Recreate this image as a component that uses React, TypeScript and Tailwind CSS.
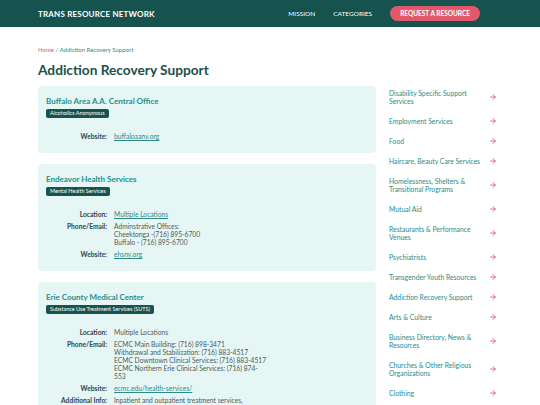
import { ArrowRight } from "lucide-react"

const categories = [
  "Disability Specific Support Services",
  "Employment Services",
  "Food",
  "Haircare, Beauty Care Services",
  "Homelessness, Shelters & Transitional Programs",
  "Mutual Aid",
  "Restaurants & Performance Venues",
  "Psychiatrists",
  "Transgender Youth Resources",
  "Addiction Recovery Support",
  "Arts & Culture",
  "Business Directory, News & Resources",
  "Churches & Other Religious Organizations",
  "Clothing",
]

type Row = { label: string; lines: string[]; link?: boolean }

type Resource = { name: string; tag: string; rows: Row[] }

const resources: Resource[] = [
  {
    name: "Buffalo Area A.A. Central Office",
    tag: "Alcoholics Anonymous",
    rows: [{ label: "Website:", lines: ["buffaloaany.org"], link: true }],
  },
  {
    name: "Endeavor Health Services",
    tag: "Mental Health Services",
    rows: [
      { label: "Location:", lines: ["Multiple Locations"], link: true },
      {
        label: "Phone/Email:",
        lines: ["Adminstrative Offices:", "Cheektonga -(716) 895-6700", "Buffalo - (716) 895-6700"],
      },
      { label: "Website:", lines: ["ehsny.org"], link: true },
    ],
  },
  {
    name: "Erie County Medical Center",
    tag: "Substance Use Treatment Services (SUTS)",
    rows: [
      { label: "Location:", lines: ["Multiple Locations"] },
      {
        label: "Phone/Email:",
        lines: [
          "ECMC Main Building: (716) 898-3471",
          "Withdrawal and Stabilization: (716) 883-4517",
          "ECMC Downtown Clinical Services: (716) 883-4517",
          "ECMC Northern Erie Clinical Services: (716) 874-",
          "553",
        ],
      },
      { label: "Website:", lines: ["ecmc.edu/health-services/"], link: true },
      {
        label: "Additional Info:",
        lines: ["Inpatient and outpatient treatment services,", "withdrawal and stabilization"],
      },
    ],
  },
]

function ResourceCard({ r }: { r: Resource }) {
  return (
    <div className="bg-[#e6f6f5] rounded-[4px] px-2 pt-[10px] pb-[13px]">
      <h2 className="text-[8px] font-bold text-[#23908a] leading-[10px]">{r.name}</h2>
      <div className="mt-[3px] flex">
        <span className="bg-[#17534f] text-white text-[5.5px] leading-[9px] px-[4px] rounded-[2px]">{r.tag}</span>
      </div>
      <div className="mt-[14px] flex flex-col gap-[4px]">
        {r.rows.map((row) => (
          <div key={row.label} className="flex gap-[7px] text-[6.7px] leading-[8px]">
            <div className="w-[61px] shrink-0 text-right font-bold text-[#2f4644]">{row.label}</div>
            <div className={row.link ? "text-[#2a8c87] underline" : "text-[#4d5c5b]"}>
              {row.lines.map((l) => (
                <div key={l}>{l}</div>
              ))}
            </div>
          </div>
        ))}
      </div>
    </div>
  )
}

export default function App() {
  return (
    <div className="min-h-screen bg-white font-['Lato',sans-serif] antialiased">
      {/* Header */}
      <header className="h-[27px] bg-[#16534f] flex items-center pl-[38px] pr-[60px]">
        <div className="text-white font-bold text-[8px] tracking-[0.2px]">TRANS RESOURCE NETWORK</div>
        <nav className="ml-auto flex items-center text-white text-[6.5px]">
          <span>MISSION</span>
          <span className="ml-[18px]">CATEGORIES</span>
          <span className="ml-[18px] bg-[#e15a6c] rounded-full px-[10px] py-[4px] font-bold text-[6.5px] leading-[7px]">
            REQUEST A RESOURCE
          </span>
        </nav>
      </header>

      <div className="px-[38px]">
        <div className="mt-[19px] text-[6px] leading-[8px] text-[#2a8c87]">
          <span className="text-[#e15a6c]">Home</span> / Addiction Recovery Support
        </div>
        <h1 className="mt-[7px] text-[13.7px] leading-[18px] font-bold text-[#1d504c]">Addiction Recovery Support</h1>

        <div className="mt-[7px] flex gap-[13px]">
          <main className="w-[338px] flex flex-col gap-[11px]">
            {resources.map((r) => (
              <ResourceCard key={r.name} r={r} />
            ))}
          </main>

          <aside className="w-[111px] -mt-[3px] flex flex-col">
            {categories.map((c) => (
              <div key={c} className="flex items-center justify-between py-[6px] pr-[3px]">
                <span className="w-[94px] text-[6.8px] leading-[8px] text-[#2a8c87]">{c}</span>
                <ArrowRight className="w-[8px] h-[8px] text-[#e8687a]" strokeWidth={3} />
              </div>
            ))}
          </aside>
        </div>
      </div>
    </div>
  )
}
